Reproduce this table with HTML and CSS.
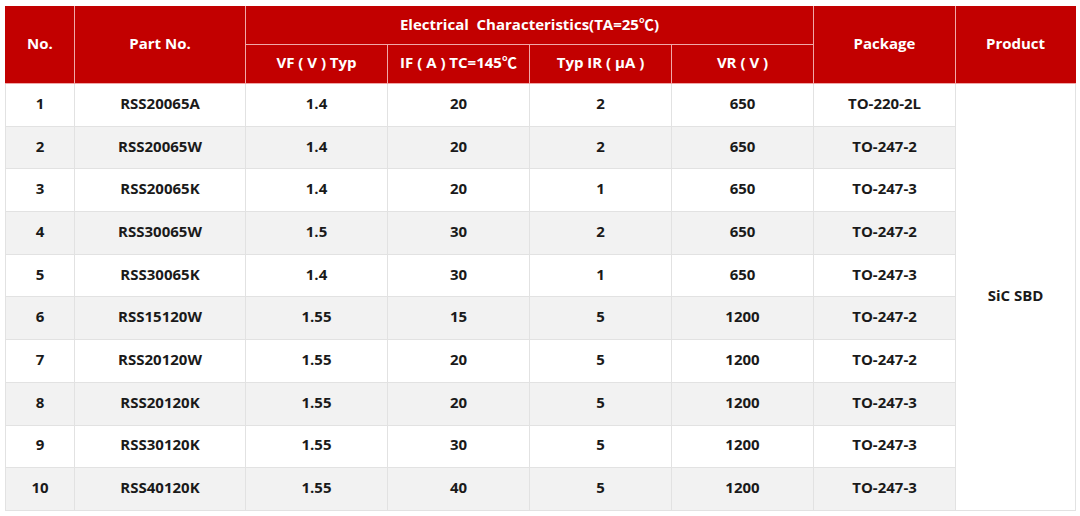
FILE: index.html
```html
<!DOCTYPE html>
<html>
<head>
<meta charset="utf-8">
<link rel="stylesheet" href="styles.css">
</head>
<body>
<table class="spec">
  <colgroup>
    <col class="c-no"><col class="c-part"><col class="c-std"><col class="c-std"><col class="c-std"><col class="c-std"><col class="c-std"><col class="c-prod">
  </colgroup>
  <thead>
    <tr class="h1">
      <th rowspan="2">No.</th>
      <th rowspan="2">Part No.</th>
      <th colspan="4" class="group">Electrical&nbsp; Characteristics(TA=25℃)</th>
      <th rowspan="2">Package</th>
      <th rowspan="2">Product</th>
    </tr>
    <tr class="h2">
      <th>VF ( V ) Typ</th>
      <th>IF ( A ) TC=145℃</th>
      <th>Typ IR ( μA )</th>
      <th>VR ( V )</th>
    </tr>
  </thead>
  <tbody>
    <tr><td>1</td><td>RSS20065A</td><td>1.4</td><td>20</td><td>2</td><td>650</td><td>TO-220-2L</td><td rowspan="10" class="prod">SiC SBD</td></tr>
    <tr><td>2</td><td>RSS20065W</td><td>1.4</td><td>20</td><td>2</td><td>650</td><td>TO-247-2</td></tr>
    <tr><td>3</td><td>RSS20065K</td><td>1.4</td><td>20</td><td>1</td><td>650</td><td>TO-247-3</td></tr>
    <tr><td>4</td><td>RSS30065W</td><td>1.5</td><td>30</td><td>2</td><td>650</td><td>TO-247-2</td></tr>
    <tr><td>5</td><td>RSS30065K</td><td>1.4</td><td>30</td><td>1</td><td>650</td><td>TO-247-3</td></tr>
    <tr><td>6</td><td>RSS15120W</td><td>1.55</td><td>15</td><td>5</td><td>1200</td><td>TO-247-2</td></tr>
    <tr><td>7</td><td>RSS20120W</td><td>1.55</td><td>20</td><td>5</td><td>1200</td><td>TO-247-2</td></tr>
    <tr><td>8</td><td>RSS20120K</td><td>1.55</td><td>20</td><td>5</td><td>1200</td><td>TO-247-3</td></tr>
    <tr><td>9</td><td>RSS30120K</td><td>1.55</td><td>30</td><td>5</td><td>1200</td><td>TO-247-3</td></tr>
    <tr><td>10</td><td>RSS40120K</td><td>1.55</td><td>40</td><td>5</td><td>1200</td><td>TO-247-3</td></tr>
  </tbody>
</table>
</body>
</html>
```
FILE: styles.css
```css
html, body {
  margin: 0;
  padding: 0;
  background: #ffffff;
}
body {
  padding: 6px 0 0 5px;
  font-family: "Open Sans", "Noto Sans CJK SC", sans-serif;
}
.spec {
  border-collapse: collapse;
  table-layout: fixed;
  width: 1071px;
  font-weight: 700;
  font-size: 15px;
  color: #1a1a1a;
}
.c-no { width: 69px; }
.c-part { width: 171px; }
.c-std { width: 142px; }
.c-prod { width: 120px; }
.spec th {
  background: #c20000;
  color: #ffffff;
  border: 1px solid #f0a8a8;
  font-weight: 700;
  padding: 0 0 5px 0;
  text-align: center;
  font-size: 15px;
}
.spec thead tr:first-child th {
  border-top-color: #c20000;
}
.spec thead th:first-child { border-left-color: #c20000; }
.spec thead tr:first-child th:last-child { border-right-color: #c20000; }
.h1 { height: 38px; }
.h2 { height: 39px; }
.spec tbody tr {
  height: 42.7px;
}
.spec td {
  border: 1px solid #e2e2e2;
  padding: 0 0 4px 0;
  text-align: center;
}
.spec tbody tr:nth-child(even) td {
  background: #f2f2f2;
}
.spec tbody td.prod {
  background: #ffffff;
}
```
